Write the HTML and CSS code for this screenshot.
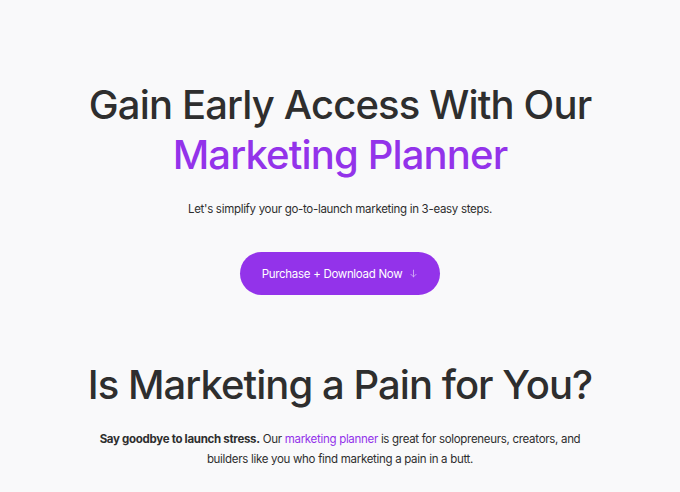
FILE: index.html
```html
<!DOCTYPE html>
<html lang="en">
<head>
<meta charset="utf-8">
<title>Marketing Planner</title>
<link rel="stylesheet" href="styles.css">
</head>
<body>
<main class="page">
  <section class="hero">
    <h1 class="hero-title">Gain Early Access With Our<br><span class="accent">Marketing Planner</span></h1>
    <p class="hero-sub">Let's simplify your go-to-launch marketing in 3-easy steps.</p>
    <a class="cta" href="#">Purchase + Download Now
      <svg class="cta-icon" viewBox="0 0 16 16" width="9" height="9" fill="none" stroke="currentColor" stroke-width="1.5" stroke-linecap="round" stroke-linejoin="round"><path d="M8 2v12M3.5 9.5L8 14l4.5-4.5"/></svg>
    </a>
  </section>
  <section class="pain">
    <h2 class="pain-title">Is Marketing a Pain for You?</h2>
    <p class="pain-text"><strong>Say goodbye to launch stress.</strong> Our <a class="link" href="#">marketing planner</a> is great for solopreneurs, creators, and builders like you who find marketing a pain in a butt.</p>
  </section>
</main>
</body>
</html>
```
FILE: styles.css
```css
html, body {
  margin: 0;
  padding: 0;
  background: #f9f9fa;
}
body {
  font-family: Inter, "Noto Sans", sans-serif;
  color: #2e2e2e;
}
.page {
  display: flex;
  flex-direction: column;
  align-items: center;
  padding-top: 80px;
}
.hero {
  display: flex;
  flex-direction: column;
  align-items: center;
  text-align: center;
}
.hero-title {
  margin: 0;
  font-size: 40px;
  font-weight: 500;
  line-height: 50px;
  letter-spacing: -0.85px;
  color: #2e2e2e;
}
.accent {
  color: #9333ea;
}
.hero-sub {
  margin: 20px 0 0;
  font-size: 11.5px;
  line-height: 18px;
  letter-spacing: -0.3px;
}
.cta {
  margin-top: 34px;
  display: inline-flex;
  align-items: center;
  gap: 7px;
  height: 43px;
  padding: 0 22px;
  border-radius: 22px;
  background: #9333ea;
  color: #ffffff;
  font-size: 11.5px;
  letter-spacing: -0.3px;
  text-decoration: none;
}
.cta-icon {
  color: #d6b4f6;
}
.pain {
  display: flex;
  flex-direction: column;
  align-items: center;
  text-align: center;
  margin-top: 65px;
}
.pain-title {
  margin: 0;
  font-size: 40px;
  font-weight: 500;
  line-height: 50px;
  letter-spacing: -0.95px;
}
.pain-text {
  margin: 19px 0 0;
  width: 500px;
  font-size: 11.5px;
  line-height: 20px;
  letter-spacing: -0.3px;
}
.pain-text strong {
  font-weight: 700;
}
.link {
  color: #9333ea;
  text-decoration: none;
}
```
